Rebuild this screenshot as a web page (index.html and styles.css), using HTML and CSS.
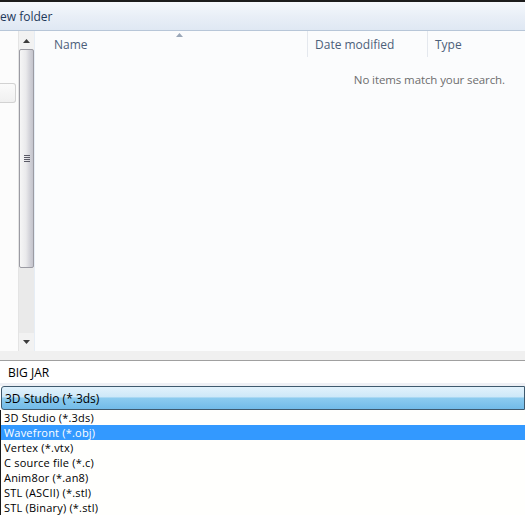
FILE: index.html
```html
<!DOCTYPE html>
<html>
<head>
<meta charset="utf-8">
<link rel="stylesheet" href="styles.css">
</head>
<body>
<div class="window">
  <div class="topline"></div>
  <div class="toolbar"><span class="tb-text">New folder</span></div>
  <div class="main">
    <div class="nav"><div class="navbtn"></div></div>
    <div class="scroll">
      <div class="sbtn up"><svg width="7" height="4" viewBox="0 0 7 4"><path d="M0 4 L3.5 0 L7 4Z" fill="#3c3c3c"/></svg></div>
      <div class="thumb"><div class="grip"></div></div>
      <div class="track"></div>
      <div class="sbtn down"><svg width="7" height="4" viewBox="0 0 7 4"><path d="M0 0 L3.5 4 L7 0Z" fill="#3c3c3c"/></svg></div>
    </div>
    <div class="divider"></div>
    <div class="files">
      <div class="header">
        <div class="col name">Name<svg class="sort" width="7" height="4" viewBox="0 0 7 4"><path d="M0 4 L3.5 0 L7 4Z" fill="#9aa7b8"/></svg></div>
        <div class="col date">Date modified</div>
        <div class="col type">Type</div>
      </div>
      <div class="empty">No items match your search.</div>
    </div>
  </div>
  <div class="band"></div>
  <div class="input">BIG JAR</div>
  <div class="gap"></div>
  <div class="combo">3D Studio (*.3ds)</div>
  <ul class="dropdown">
    <li>3D Studio (*.3ds)</li>
    <li class="sel">Wavefront (*.obj)</li>
    <li>Vertex (*.vtx)</li>
    <li>C source file (*.c)</li>
    <li>Anim8or (*.an8)</li>
    <li>STL (ASCII) (*.stl)</li>
    <li>STL (Binary) (*.stl)</li>
  </ul>
</div>
</body>
</html>
```

FILE: styles.css
```css
* { box-sizing: border-box; }
html, body { margin: 0; padding: 0; }
body {
  width: 525px;
  height: 515px;
  overflow: hidden;
  background: #fff;
  font-family: "Open Sans", "Noto Sans", sans-serif;
  font-size: 11.5px;
  color: #000;
}
.window { display: flex; flex-direction: column; width: 525px; height: 515px; }
.topline { height: 2px; background: #1c1c1c; flex: none; }
.toolbar {
  height: 29px;
  flex: none;
  background: linear-gradient(#f5f8fc, #e9eff7 50%, #dfe8f3);
  border-bottom: 1px solid #b7c6d8;
  display: flex;
  align-items: center;
  overflow: hidden;
  color: #1e395b;
  font-size: 12px;
}
.tb-text { margin-left: -9px; white-space: nowrap; }
.main { height: 320px; flex: none; display: flex; background: #fbfcfd; }
.nav { width: 18px; flex: none; background: #fcfcfc; }
.navbtn {
  margin-top: 52px;
  height: 20px;
  width: 16px;
  border: 1px solid #d2d2d2;
  border-left: none;
  border-radius: 0 3px 3px 0;
  background: linear-gradient(#fbfbfb, #f0f0f0);
}
.scroll {
  width: 16px;
  flex: none;
  display: flex;
  flex-direction: column;
  background: #ececec;
  border-left: 1px solid #e4e4e4;
}
.sbtn { height: 18px; flex: none; display: flex; align-items: center; justify-content: center; background: #f2f2f2; }
.sbtn.up { padding-top: 2px; }
.thumb {
  height: 219px;
  flex: none;
  border: 1px solid #9b9ba3;
  border-radius: 2px;
  background: linear-gradient(90deg, #f6f6f6, #eaeaec 45%, #cfcfd6 80%, #c4c4cc);
  display: flex;
  align-items: center;
  justify-content: center;
}
.grip {
  width: 6px;
  height: 7px;
  background: repeating-linear-gradient(#5a5a66 0 1px, transparent 1px 2px);
}
.track { flex: 1; background: #eaeaea; }
.divider { width: 3px; flex: none; background: #fbfcfd; border-left: 1px solid #e6edf5; }
.files { flex: 1; display: flex; flex-direction: column; }
.header { height: 26px; display: flex; color: #4c607a; font-size: 12px; }
.col { display: flex; align-items: center; border-right: 1px solid #e4e8ee; height: 26px; position: relative; }
.col.name { width: 271px; padding-left: 17px; }
.col.date { width: 120px; padding-left: 7px; }
.col.type { flex: 1; padding-left: 7px; border-right: none; }
.sort { position: absolute; left: 139px; top: 2px; }
.empty { text-align: right; padding-right: 20px; padding-top: 15px; color: #6d6d6d; font-size: 11.5px; letter-spacing: -0.1px; }
.band { height: 10px; flex: none; background: #f0f0f0; border-bottom: 1px solid #a0a0a0; }
.input { height: 22px; flex: none; background: #fff; padding-left: 8px; display: flex; align-items: center; font-size: 12px; }
.gap { height: 3px; flex: none; background: #eef0f5; }
.combo {
  height: 24px;
  flex: none;
  border: 1px solid #3f5a6e;
  border-radius: 3px 0 0 3px;
  margin-left: 1px;
  background: linear-gradient(#e2f2fc, #cde8f8 45%, #8ccbef 50%, #72bbe8);
  padding-left: 3px;
  display: flex;
  align-items: center;
  font-size: 12px;
}
.dropdown {
  list-style: none;
  margin: 0;
  padding: 0;
  flex: 1;
  background: #fffffd;
  border-left: 1px solid #1a1a1a;
  font-size: 11px;
  letter-spacing: 0.2px;
}
.dropdown li { height: 15px; line-height: 15px; padding-left: 3px; white-space: nowrap; }
.dropdown li.sel { background: #3399ff; color: #fff; }
```
